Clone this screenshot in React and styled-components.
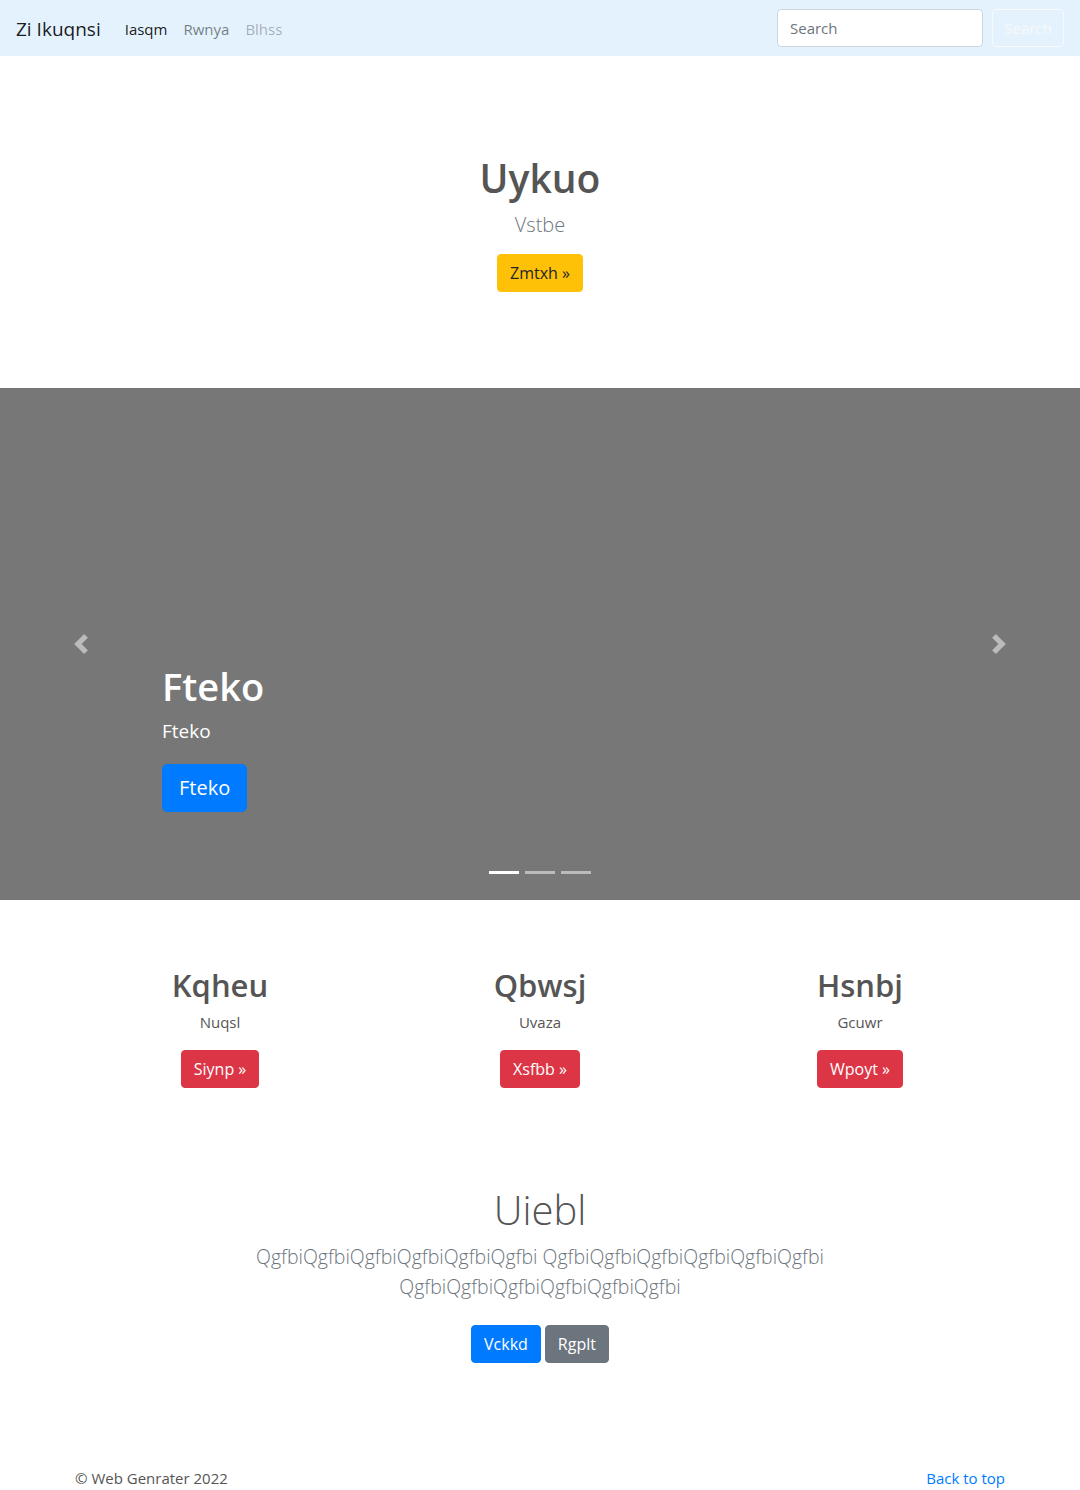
import React from "react";
import styled, { createGlobalStyle } from "styled-components";

const GlobalStyle = createGlobalStyle`
  * { box-sizing: border-box; }
  body {
    margin: 0;
    font-family: "Open Sans", "Noto Sans", Arial, sans-serif;
    font-size: 16px;
    line-height: 1.5;
    color: #555;
    background: #fff;
  }
  h1, h2, p { margin: 0; }
`;

const Navbar = styled.nav`
  display: flex;
  align-items: center;
  height: 56px;
  padding: 9px 16px 7px;
  background: #e3f2fd;
`;

const Brand = styled.a`
  font-size: 19px;
  line-height: 30px;
  margin-right: 16px;
  color: rgba(0, 0, 0, 0.9);
  text-decoration: none;
`;

const NavList = styled.div`
  display: flex;
  flex: 1;
`;

const NavLink = styled.a`
  padding: 8px;
  font-size: 15px;
  text-decoration: none;
  color: ${(p) =>
    p.$state === "active"
      ? "rgba(0,0,0,0.9)"
      : p.$state === "disabled"
      ? "rgba(0,0,0,0.3)"
      : "rgba(0,0,0,0.5)"};
`;

const SearchForm = styled.form`
  display: flex;
  gap: 9px;
  margin-top: -2px;
`;

const SearchInput = styled.input`
  width: 206px;
  height: 38px;
  padding: 6px 12px;
  font: inherit;
  font-size: 15px;
  color: #495057;
  background: #fff;
  border: 1px solid #ced4da;
  border-radius: 4px;
  &::placeholder { color: #6c757d; }
`;

const OutlineButton = styled.button`
  width: 72px;
  height: 38px;
  font: inherit;
  font-size: 15px;
  color: #f8f9fa;
  background: transparent;
  border: 1px solid #f8f9fa;
  border-radius: 4px;
`;

const Hero = styled.section`
  display: flex;
  flex-direction: column;
  align-items: center;
  padding: 98px 16px 96px;
  text-align: center;
`;

const HeroTitle = styled.h1`
  font-size: 39px;
  font-weight: 600;
  line-height: 48px;
  margin-bottom: 8px;
  color: #555;
`;

const Lead = styled.p`
  font-size: 20px;
  font-weight: 300;
  line-height: 30px;
  color: #6c757d;
  margin-bottom: ${(p) => p.$mb || 16}px;
`;

const COLORS = {
  warning: ["#ffc107", "#212529"],
  primary: ["#007bff", "#fff"],
  danger: ["#dc3545", "#fff"],
  secondary: ["#6c757d", "#fff"],
};

const Button = styled.a`
  display: inline-block;
  padding: ${(p) => (p.$lg ? "8px 16px" : "6px 12px")};
  font-size: ${(p) => (p.$lg ? 20 : 16)}px;
  line-height: ${(p) => (p.$lg ? 30 : 24)}px;
  border: 1px solid ${(p) => COLORS[p.$variant][0]};
  border-radius: ${(p) => (p.$lg ? 5 : 4)}px;
  background: ${(p) => COLORS[p.$variant][0]};
  color: ${(p) => COLORS[p.$variant][1]};
  text-decoration: none;
`;

const Carousel = styled.section`
  position: relative;
  height: 512px;
  background: #777;
  display: flex;
  flex-direction: column;
  justify-content: flex-end;
  padding: 0 15% 88px;
`;

const CaptionTitle = styled.h1`
  font-size: 38px;
  font-weight: 600;
  line-height: 48px;
  color: #fff;
  margin-bottom: 6px;
`;

const CaptionText = styled.p`
  font-size: 19px;
  line-height: 30px;
  color: #fff;
  margin-bottom: 18px;
`;

const CaptionAction = styled.div`
  display: flex;
`;

const Control = styled.span`
  position: absolute;
  top: 0;
  bottom: 0;
  ${(p) => (p.$side === "left" ? "left: 0;" : "right: 0;")}
  width: 15%;
  display: flex;
  align-items: center;
  justify-content: center;
  color: rgba(255, 255, 255, 0.5);
`;

const Indicators = styled.ol`
  position: absolute;
  left: 0;
  right: 0;
  bottom: 26px;
  display: flex;
  justify-content: center;
  gap: 6px;
  margin: 0;
  padding: 0;
  list-style: none;
`;

const Indicator = styled.li`
  width: 30px;
  height: 3px;
  background: #fff;
  opacity: ${(p) => (p.$active ? 1 : 0.5)};
`;

const Container = styled.div`
  width: 960px;
  margin: 0 auto;
  padding: 0 15px;
`;

const Columns = styled.div`
  display: grid;
  grid-template-columns: repeat(3, 1fr);
  padding-top: 66px;
  margin: 0 -15px;
`;

const Column = styled.div`
  display: flex;
  flex-direction: column;
  align-items: center;
  text-align: center;
  padding: 0 15px;
`;

const ColTitle = styled.h2`
  font-size: 31px;
  font-weight: 600;
  line-height: 38px;
  margin-bottom: 6px;
  color: #555;
`;

const ColText = styled.p`
  font-size: 15px;
  line-height: 24px;
  margin-bottom: 16px;
`;

const Featurette = styled.section`
  display: flex;
  flex-direction: column;
  align-items: center;
  text-align: center;
  padding-top: 98px;
`;

const FeatTitle = styled.h1`
  font-size: 40px;
  font-weight: 300;
  line-height: 48px;
  margin-bottom: 8px;
  color: #555;
`;

const FeatLead = styled(Lead)`
  max-width: 610px;
  font-size: 19.5px;
`;

const ButtonRow = styled.div`
  display: flex;
  gap: 4px;
`;

const Footer = styled.footer`
  display: flex;
  justify-content: space-between;
  padding: 103px 0 16px;
  font-size: 15px;
  line-height: 24px;
`;

const TopLink = styled.a`
  color: #007bff;
  text-decoration: none;
`;

const Chevron = ({ dir }) => (
  <svg width="20" height="20" viewBox="0 0 8 8" fill="currentColor">
    {dir === "left" ? (
      <path d="M5.25 0l-4 4 4 4 1.5-1.5L4.25 4l2.5-2.5L5.25 0z" />
    ) : (
      <path d="M2.75 0l-1.5 1.5L3.75 4l-2.5 2.5L2.75 8l4-4-4-4z" />
    )}
  </svg>
);

const cols = [
  { title: "Kqheu", text: "Nuqsl", btn: "Siynp »" },
  { title: "Qbwsj", text: "Uvaza", btn: "Xsfbb »" },
  { title: "Hsnbj", text: "Gcuwr", btn: "Wpoyt »" },
];

const word = "Qgfbi".repeat(6);

export default function App() {
  return (
    <>
      <GlobalStyle />
      <Navbar>
        <Brand href="#">Zi Ikuqnsi</Brand>
        <NavList>
          <NavLink href="#" $state="active">Iasqm</NavLink>
          <NavLink href="#">Rwnya</NavLink>
          <NavLink href="#" $state="disabled">Blhss</NavLink>
        </NavList>
        <SearchForm onSubmit={(e) => e.preventDefault()}>
          <SearchInput placeholder="Search" />
          <OutlineButton type="submit">Search</OutlineButton>
        </SearchForm>
      </Navbar>

      <Hero>
        <HeroTitle>Uykuo</HeroTitle>
        <Lead $mb={14}>Vstbe</Lead>
        <Button href="#" $variant="warning">Zmtxh »</Button>
      </Hero>

      <Carousel>
        <Control $side="left"><Chevron dir="left" /></Control>
        <Control $side="right"><Chevron dir="right" /></Control>
        <CaptionTitle>Fteko</CaptionTitle>
        <CaptionText>Fteko</CaptionText>
        <CaptionAction>
          <Button href="#" $variant="primary" $lg>Fteko</Button>
        </CaptionAction>
        <Indicators>
          <Indicator $active />
          <Indicator />
          <Indicator />
        </Indicators>
      </Carousel>

      <Container>
        <Columns>
          {cols.map((c) => (
            <Column key={c.title}>
              <ColTitle>{c.title}</ColTitle>
              <ColText>{c.text}</ColText>
              <Button href="#" $variant="danger">{c.btn}</Button>
            </Column>
          ))}
        </Columns>

        <Featurette>
          <FeatTitle>Uiebl</FeatTitle>
          <FeatLead $mb={23}>
            {word} {word} {word}
          </FeatLead>
          <ButtonRow>
            <Button href="#" $variant="primary">Vckkd</Button>
            <Button href="#" $variant="secondary">Rgplt</Button>
          </ButtonRow>
        </Featurette>

        <Footer>
          <span>© Web Genrater 2022</span>
          <TopLink href="#">Back to top</TopLink>
        </Footer>
      </Container>
    </>
  );
}
